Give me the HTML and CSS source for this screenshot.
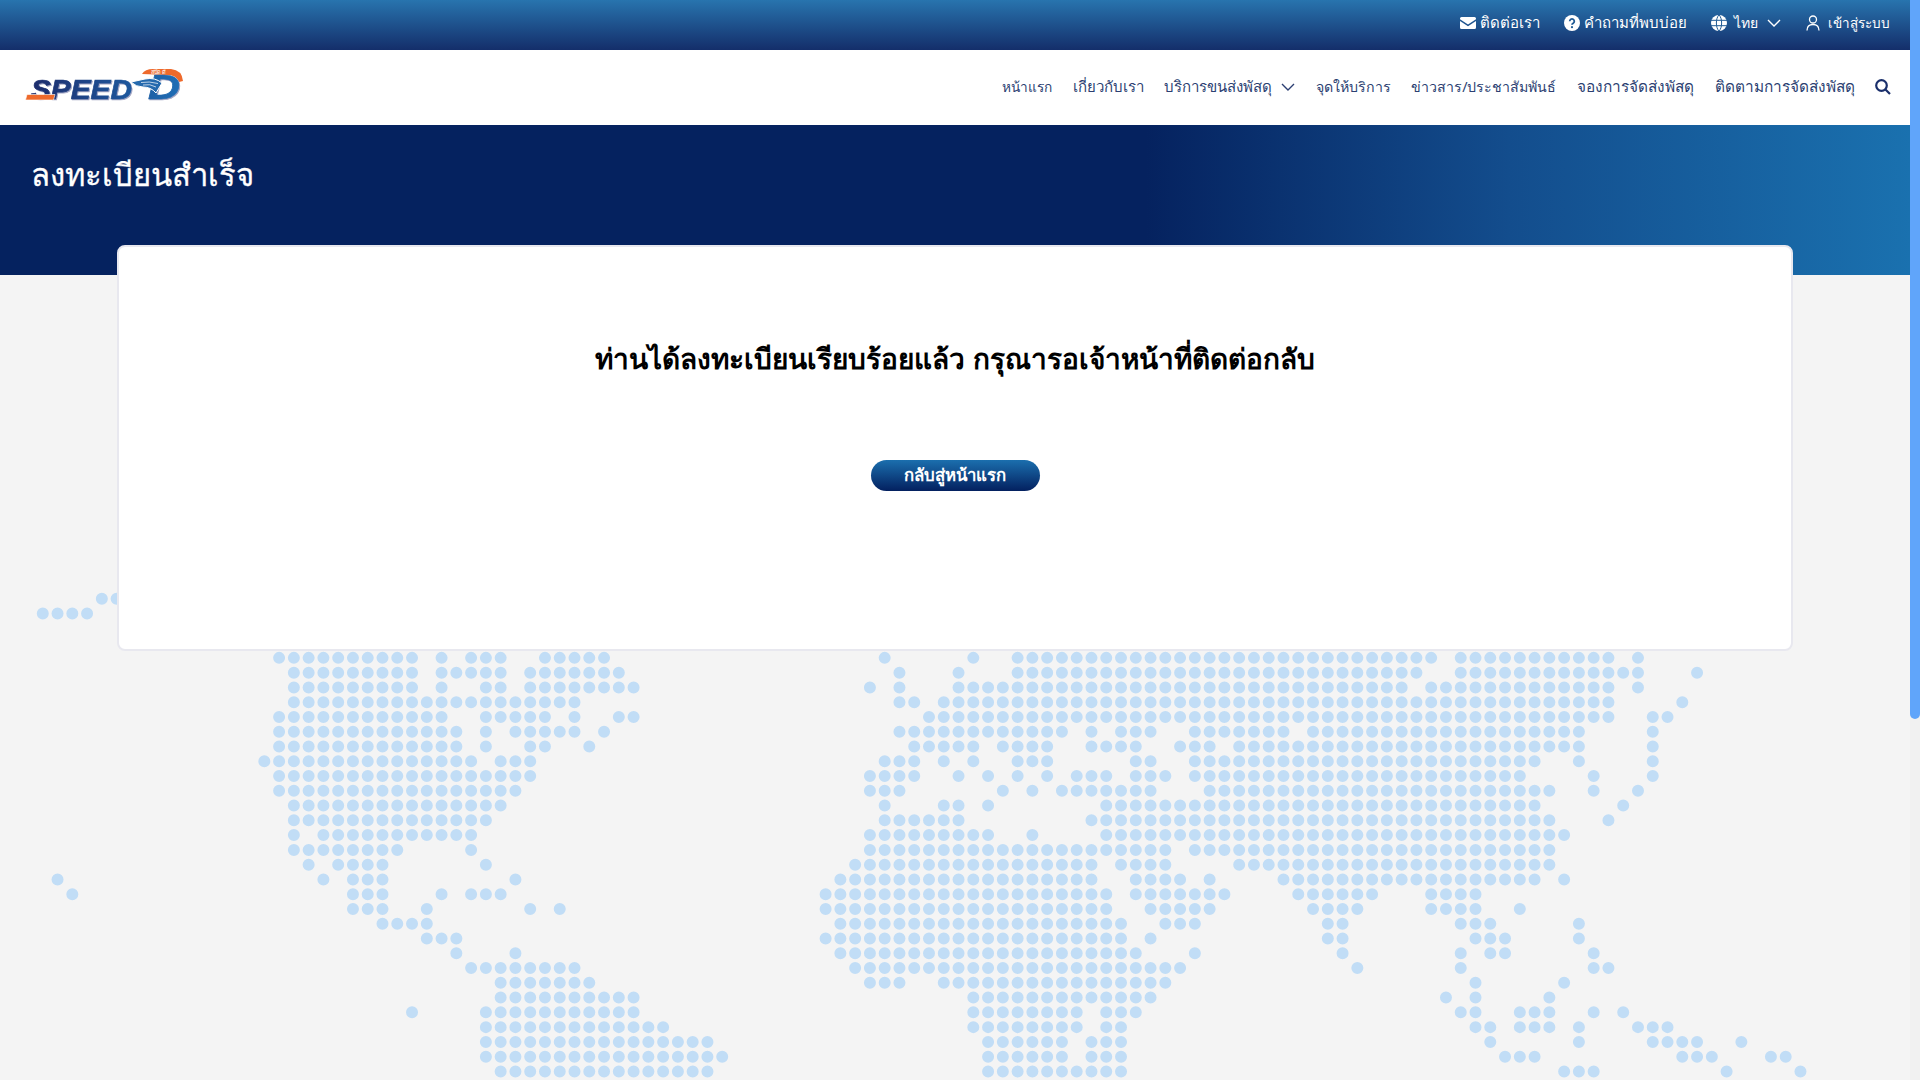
FILE: index.html
```html
<!DOCTYPE html>
<html lang="th">
<head>
    <meta charset="UTF-8">
    <title>ลงทะเบียนสำเร็จ</title>
    <link rel="stylesheet" href="styles.css">
</head>
<body>
    <div class="page">
        <div class="top-bar">
            <a class="top-link">
                <svg class="icon-envelope" viewBox="0 0 16 12"><path d="M1.5 0h13A1.5 1.5 0 0 1 16 1.5v.7L8 7.4 0 2.2v-.7A1.5 1.5 0 0 1 1.5 0z"/><path d="M0 4l8 5.2L16 4v6.5a1.5 1.5 0 0 1-1.5 1.5h-13A1.5 1.5 0 0 1 0 10.5z"/></svg>
                ติดต่อเรา
            </a>
            <a class="top-link">
                <svg class="icon-round" viewBox="0 0 16 16"><circle cx="8" cy="8" r="8"/><path class="icon-cut" d="M5.7 6.2a2.3 2.3 0 1 1 3.5 2c-.8.5-1.2.9-1.2 1.6"/><circle class="icon-dot" cx="8" cy="12.2" r="1.1"/></svg>
                คำถามที่พบบ่อย
            </a>
            <a class="top-link top-lang">
                <svg class="icon-round" viewBox="0 0 16 16"><circle cx="8" cy="8" r="8"/><path class="icon-grid" d="M0 5.3h16M0 10.7h16M8 0C4.500 3 4.500 13 8 16M8 0c3.500 3 3.500 13 0 16"/></svg>
                <span class="lang-name">ไทย</span>
                <svg class="chevron" viewBox="0 0 14 8"><path d="M1 1l6 6 6-6"/></svg>
            </a>
            <a class="top-link top-login">
                <svg class="icon-user" viewBox="0 0 16 16"><circle cx="8" cy="4.500" r="3.500"/><path d="M2 15.500c0-4 2.500-6 6-6s6 2 6 6"/></svg>
                <span class="login-name">เข้าสู่ระบบ</span>
            </a>
        </div>

        <div class="nav-bar">
            <svg class="logo" viewBox="0 -5 160 50">
                <defs>
                    <linearGradient id="logoBlue" gradientUnits="userSpaceOnUse" x1="5" x2="160" y1="0" y2="0">
                        <stop offset="0" stop-color="#1c2b6b"/>
                        <stop offset="1" stop-color="#1f70b8"/>
                    </linearGradient>
                </defs>
                <path d="M117 6Q120 1 128 1H146Q157 2 158 13L154 14Q151 7 143 7Z" fill="#ee6a2c"/>
                <text class="logo-small" x="126" y="6">สปีด ดี</text>
                <text class="logo-word" x="6" y="30.500" textLength="101" lengthAdjust="spacingAndGlyphs">SPEED</text>
                <path d="M2 26.500H30L28.500 32H.5Z" fill="#ee6a2c" stroke="#fff" stroke-width="0.6"/>
                <text class="logo-word logo-d" x="123" y="31" textLength="32" lengthAdjust="spacingAndGlyphs">D</text>
                <path d="M106 14L120 11Q130 9 137 15L131 25Q126 19 118 19Q111 19 106 14Z" fill="#2469ad" stroke="#fff"/>
                <path class="logo-wing" d="M116 14.500Q124 13 133 15.500M118 17Q125 15.500 131 19"/>
            </svg>
            <nav class="nav-menu">
                <a class="nav-small">หน้าแรก</a>
                <a>เกี่ยวกับเรา</a>
                <a class="nav-drop">บริการขนส่งพัสดุ <svg class="chevron" viewBox="0 0 14 8"><path d="M1 1l6 6 6-6"/></svg></a>
                <a class="nav-mid">จุดให้บริการ</a>
                <a class="nav-mid">ข่าวสาร/ประชาสัมพันธ์</a>
                <a class="nav-large">จองการจัดส่งพัสดุ</a>
                <a class="nav-large">ติดตามการจัดส่งพัสดุ</a>
                <svg class="icon-search" viewBox="0 0 16 16"><circle cx="6.500" cy="6.500" r="5.300"/><path d="M10.500 10.500L15 15"/></svg>
            </nav>
        </div>

        <div class="hero">
            <h1>ลงทะเบียนสำเร็จ</h1>
        </div>

        <main class="content">
            <svg class="world-map" viewBox="-1 -5 122 35">
                <path d="M4 -4h1.010M0 -3h3.010"/>
                <path d="M16 0h9.010M27 0h.01M29 0h2.010M34 0h4.010M57 0h.01M63 0h.01M66 0h28.010M96 0h10.010M108 0h.01"/>
                <path d="M17 1h8.010M27 1h4.010M33 1h6.010M58 1h.01M62 1h.01M66 1h27.010M96 1h12.010M112 1h.01"/>
                <path d="M17 2h8.010M27 2h.01M30 2h1.010M33 2h7.010M56 2h.01M58 2h.01M62 2h30.010M94 2h12.010M108 2h.01"/>
                <path d="M17 3h19.010M58 3h1.010M61 3h45.010M111 3h.01"/>
                <path d="M16 4h11.010M30 4h4.010M36 4h.01M39 4h1.010M60 4h46.010M109 4h1.010"/>
                <path d="M16 5h12.010M30 5h.01M32 5h4.010M38 5h.01M58 5h11.010M71 5h.01M73 5h2.010M78 5h6.010M86 5h18.010M109 5h.01"/>
                <path d="M16 6h12.010M30 6h.01M33 6h1.010M37 6h.01M59 6h4.010M65 6h3.010M71 6h3.010M77 6h2.010M81 6h23.010M109 6h.01"/>
                <path d="M15 7h14.010M31 7h2.010M57 7h2.010M61 7h.01M63 7h.01M66 7h2.010M74 7h1.010M78 7h23.010M104 7h.01M109 7h.01"/>
                <path d="M16 8h17.010M56 8h3.010M62 8h.01M64 8h.01M66 8h.01M68 8h.01M70 8h2.010M74 8h2.010M78 8h22.010M105 8h.01M109 8h.01"/>
                <path d="M16 9h16.010M56 9h2.010M65 9h.01M67 9h.01M69 9h6.010M79 9h23.010M105 9h.01M108 9h.01"/>
                <path d="M17 10h14.010M57 10h.01M61 10h1.010M64 10h.01M72 10h29.010M107 10h.01"/>
                <path d="M17 11h13.010M57 11h5.010M71 11h31.010M106 11h.01"/>
                <path d="M17 12h.01M19 12h10.010M56 12h8.010M67 12h.01M72 12h31.010"/>
                <path d="M17 13h7.010M29 13h.01M56 13h20.010M78 13h24.010"/>
                <path d="M18 14h.01M20 14h3.010M30 14h.01M55 14h16.010M73 14h3.010M81 14h21.010"/>
                <path d="M1 15h.01M19 15h.01M21 15h2.010M32 15h.01M54 15h17.010M74 15h3.010M79 15h.01M84 15h17.010M103 15h.01"/>
                <path d="M2 16h.01M21 16h2.010M27 16h.01M29 16h2.010M53 16h19.010M74 16h6.010M85 16h5.010M94 16h3.010"/>
                <path d="M21 17h2.010M26 17h.01M33 17h.01M35 17h.01M53 17h19.010M75 17h4.010M86 17h3.010M94 17h3.010M100 17h.01"/>
                <path d="M23 18h3.010M54 18h19.010M76 18h2.010M87 18h1.010M96 18h2.010M104 18h.01"/>
                <path d="M26 19h2.010M53 19h20.010M75 19h.01M87 19h1.010M97 19h2.010M104 19h.01"/>
                <path d="M28 20h.01M32 20h.01M54 20h20.010M78 20h.01M88 20h.01M96 20h.01M98 20h1.010M105 20h.01"/>
                <path d="M29 21h7.010M55 21h22.010M89 21h.01M96 21h.01M105 21h1.010"/>
                <path d="M31 22h6.010M56 22h2.010M61 22h15.010M97 22h.01M103 22h.01"/>
                <path d="M31 23h9.010M63 23h12.010M95 23h.01M97 23h.01M102 23h.01"/>
                <path d="M25 24h.01M30 24h10.010M63 24h7.010M72 24h2.010M96 24h1.010M100 24h2.010M105 24h.01M107 24h.01"/>
                <path d="M30 25h12.010M63 25h7.010M72 25h1.010M97 25h1.010M100 25h2.010M104 25h.01M108 25h2.010"/>
                <path d="M30 26h15.010M64 26h5.010M71 26h2.010M98 26h.01M104 26h.01M109 26h3.010M115 26h.01"/>
                <path d="M30 27h16.010M64 27h5.010M71 27h2.010M99 27h2.010M111 27h2.010M117 27h1.010"/>
                <path d="M31 28h14.010M64 28h9.010M103 28h2.010M114 28h.01M119 28h.01"/>
            </svg>

            <div class="success-card">
                <h2>ท่านได้ลงทะเบียนเรียบร้อยแล้ว กรุณารอเจ้าหน้าที่ติดต่อกลับ</h2>
                <a class="back-btn">กลับสู่หน้าแรก</a>
            </div>
        </main>
    </div>

    <div class="scroll-track"><div class="scroll-thumb"></div></div>
</body>
</html>
```
FILE: styles.css
```css
* {
    margin: 0;
    padding: 0;
    box-sizing: border-box;
}

html, body {
    height: 1080px;
    overflow: hidden;
}

body {
    display: flex;
    font-family: "Noto Sans", sans-serif;
    background: #f4f4f4;
}

.page {
    width: 1910px;
    display: flex;
    flex-direction: column;
}

/* top strip */
.top-bar {
    height: 50px;
    display: flex;
    justify-content: flex-end;
    align-items: center;
    gap: 24px;
    padding: 0 20px 4px 0;
    background: linear-gradient(180deg, #2874ae, #142e6a);
    color: #fff;
    font-size: 15px;
}

.top-link {
    display: flex;
    align-items: center;
    gap: 4px;
}

.top-lang {
    gap: 7px;
}

.top-login {
    gap: 7px;
}

.lang-name {
    margin-right: 2px;
    font-size: 14px;
}

.login-name {
    font-size: 13.500px;
}

.icon-envelope {
    width: 16px;
    height: 12px;
    fill: #fff;
}

.icon-round {
    width: 16px;
    height: 16px;
    fill: #fff;
}

.icon-cut {
    fill: none;
    stroke: #1f5a94;
    stroke-width: 1.8;
}

.icon-dot {
    fill: #1f5a94;
}

.icon-grid {
    fill: none;
    stroke: #1f5a94;
    stroke-width: 1;
}

.icon-user {
    width: 16px;
    height: 16px;
    fill: none;
    stroke: #fff;
    stroke-width: 1.3;
}

.chevron {
    width: 14px;
    height: 8px;
    fill: none;
    stroke: currentColor;
    stroke-width: 1.4;
}

/* main menu */
.nav-bar {
    height: 75px;
    display: flex;
    justify-content: space-between;
    align-items: center;
    padding: 0 19px 0 25px;
    background: #fff;
}

.logo {
    width: 160px;
    height: 50px;
}

.logo-word {
    font-family: "Liberation Sans", sans-serif;
    font-size: 28px;
    font-weight: bold;
    font-style: italic;
    fill: url(#logoBlue);
    stroke: url(#logoBlue);
    stroke-width: 0.7;
    filter: drop-shadow(1px 1px 0 #a0a3c2);
}

.logo-d {
    font-size: 35px;
}

.logo-small {
    font-size: 5.500px;
    fill: #fff;
}

.logo-wing {
    fill: none;
    stroke: #fff;
    stroke-width: 0.7;
}

.nav-menu {
    display: flex;
    align-items: center;
    gap: 20.500px;
    padding-bottom: 2px;
    color: #2c3f72;
    font-size: 15px;
}

.nav-small {
    font-size: 13.700px;
}

.nav-mid {
    font-size: 14.200px;
}

.nav-large {
    font-size: 15.400px;
}

.nav-drop {
    display: flex;
    align-items: center;
    gap: 9px;
}

.icon-search {
    width: 16px;
    height: 16px;
    fill: none;
    stroke: #1a2f6b;
    stroke-width: 2.200;
}

/* page title */
.hero {
    height: 150px;
    padding: 27px 31px 0;
    background: linear-gradient(90deg, #05225f 60%, #134d8d 79%, #1a71af 100%);
    color: #fff;
}

.hero h1 {
    font-size: 31px;
    font-weight: 500;
    line-height: 44px;
    -webkit-text-stroke: 0.3px #fff;
}

/* body area */
.content {
    flex: 1;
    position: relative;
}

.world-map {
    position: absolute;
    left: 27.600px;
    top: 309.400px;
    width: 1802px;
    height: 517px;
    fill: none;
    stroke: #c1ddf6;
    stroke-width: 0.8125;
    stroke-linecap: round;
    stroke-dasharray: 0 1;
}

.success-card {
    position: relative;
    width: 1676px;
    height: 406px;
    margin: -30px auto 0;
    padding-top: 86px;
    display: flex;
    flex-direction: column;
    align-items: center;
    background: #fff;
    border: 2px solid #e8e8ef;
    border-radius: 8px;
}

.success-card h2 {
    font-size: 28px;
    font-weight: 700;
    line-height: 50px;
    color: #000;
}

.back-btn {
    margin-top: 77px;
    width: 169px;
    height: 31px;
    padding-bottom: 2px;
    display: flex;
    justify-content: center;
    align-items: center;
    border-radius: 16px;
    background: linear-gradient(180deg, #1b6fae, #03205f);
    color: #fff;
    font-size: 16.800px;
    font-weight: 700;
}

/* page scrollbar */
.scroll-track {
    width: 10px;
    background: #f1f1f1;
}

.scroll-thumb {
    height: 719px;
    background: #60a5fa;
    border-radius: 0 0 5px 5px;
}
```
